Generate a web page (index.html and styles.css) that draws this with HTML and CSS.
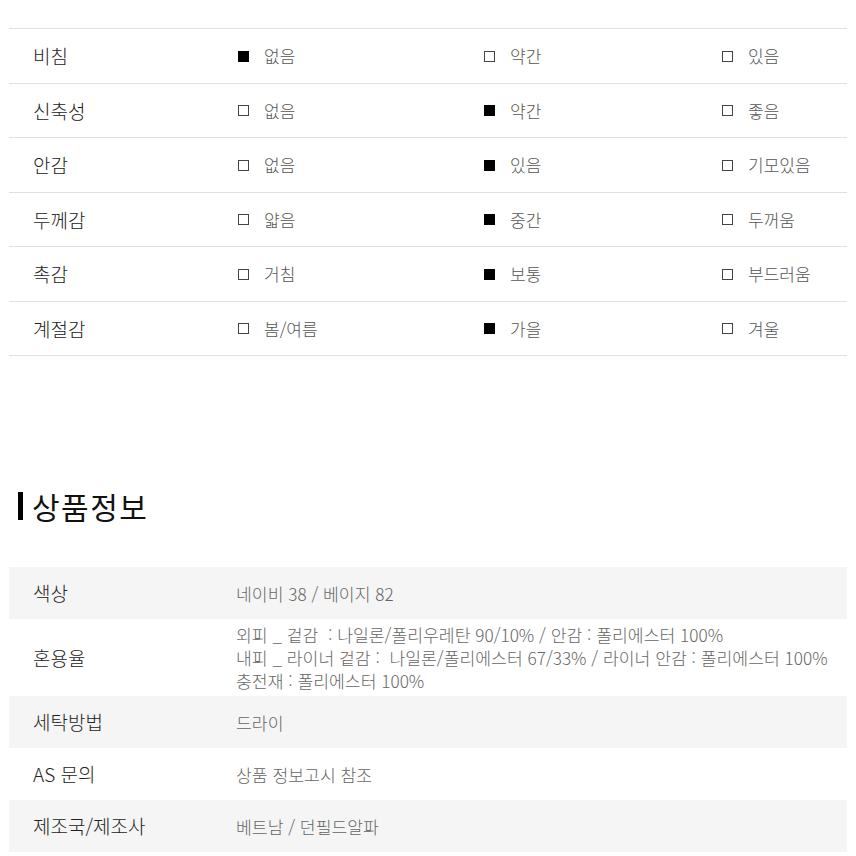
FILE: index.html
```html
<!DOCTYPE html>
<html lang="ko">
<head>
<meta charset="utf-8">
<link rel="stylesheet" href="styles.css">
</head>
<body>
<div class="page">
  <div class="spec">
    <div class="spec-row">
      <div class="spec-label">비침</div>
      <div class="opt"><span class="box on"></span>없음</div>
      <div class="opt"><span class="box"></span>약간</div>
      <div class="opt"><span class="box"></span>있음</div>
    </div>
    <div class="spec-row">
      <div class="spec-label">신축성</div>
      <div class="opt"><span class="box"></span>없음</div>
      <div class="opt"><span class="box on"></span>약간</div>
      <div class="opt"><span class="box"></span>좋음</div>
    </div>
    <div class="spec-row">
      <div class="spec-label">안감</div>
      <div class="opt"><span class="box"></span>없음</div>
      <div class="opt"><span class="box on"></span>있음</div>
      <div class="opt"><span class="box"></span>기모있음</div>
    </div>
    <div class="spec-row">
      <div class="spec-label">두께감</div>
      <div class="opt"><span class="box"></span>얇음</div>
      <div class="opt"><span class="box on"></span>중간</div>
      <div class="opt"><span class="box"></span>두꺼움</div>
    </div>
    <div class="spec-row">
      <div class="spec-label">촉감</div>
      <div class="opt"><span class="box"></span>거침</div>
      <div class="opt"><span class="box on"></span>보통</div>
      <div class="opt"><span class="box"></span>부드러움</div>
    </div>
    <div class="spec-row">
      <div class="spec-label">계절감</div>
      <div class="opt"><span class="box"></span>봄/여름</div>
      <div class="opt"><span class="box on"></span>가을</div>
      <div class="opt"><span class="box"></span>겨울</div>
    </div>
  </div>

  <h2 class="section-title">상품정보</h2>

  <div class="info">
    <div class="info-row shade">
      <div class="info-label">색상</div>
      <div class="info-value">네이비 38 / 베이지 82</div>
    </div>
    <div class="info-row">
      <div class="info-label">혼용율</div>
      <div class="info-value">외피 _ 겉감 &nbsp;: 나일론/폴리우레탄 90/10% / 안감 : 폴리에스터 100%<br>내피 _ 라이너 겉감 : &nbsp;나일론/폴리에스터 67/33% / 라이너 안감 : 폴리에스터 100%<br>충전재 : 폴리에스터 100%</div>
    </div>
    <div class="info-row shade">
      <div class="info-label">세탁방법</div>
      <div class="info-value">드라이</div>
    </div>
    <div class="info-row">
      <div class="info-label">AS 문의</div>
      <div class="info-value">상품 정보고시 참조</div>
    </div>
    <div class="info-row shade">
      <div class="info-label">제조국/제조사</div>
      <div class="info-value">베트남 / 던필드알파</div>
    </div>
  </div>
</div>
</body>
</html>
```

FILE: styles.css
```css
* { box-sizing: border-box; }
html, body { margin: 0; padding: 0; background: #fff; }
body {
  font-family: "Noto Sans CJK KR", "Noto Sans", sans-serif;
  color: #222;
}
.page {
  padding: 28px 9px 0 9px;
}
.spec {
  border-top: 1px solid #e0e0e0;
}
.spec-row {
  display: grid;
  grid-template-columns: 229px 246px 238px 1fr;
  align-items: center;
  height: 54.5px;
  border-bottom: 1px solid #e0e0e0;
}
.spec-label {
  padding-left: 24px;
  font-size: 19px;
  font-weight: 300;
  color: #222;
}
.opt {
  display: flex;
  align-items: center;
  font-size: 17px;
  font-weight: 300;
  color: #555;
}
.box {
  width: 11px;
  height: 11px;
  border: 1px solid #444;
  margin-right: 15px;
  margin-top: 1px;
  background: #fff;
}
.box.on {
  background: #000;
  border-color: #000;
}
.section-title {
  margin: 132px 0 0 0;
  padding-left: 9px;
  font-size: 30px;
  line-height: 36px;
  font-weight: 400;
  letter-spacing: 1.5px;
  color: #111;
  display: flex;
  align-items: center;
}
.section-title::before {
  content: "";
  display: block;
  width: 5px;
  height: 28px;
  background: #000;
  margin-right: 9px;
}
.info {
  margin-top: 43px;
}
.info-row {
  display: grid;
  grid-template-columns: 227px 1fr;
  align-items: center;
  min-height: 52px;
  padding: 4px 0;
}
.info-row.shade {
  background: #f5f5f5;
}
.info-label {
  padding-left: 24px;
  font-size: 19px;
  font-weight: 300;
  line-height: 32px;
  color: #222;
}
.info-value {
  font-size: 17.2px;
  font-weight: 300;
  line-height: 23px;
  color: #666;
}
```
